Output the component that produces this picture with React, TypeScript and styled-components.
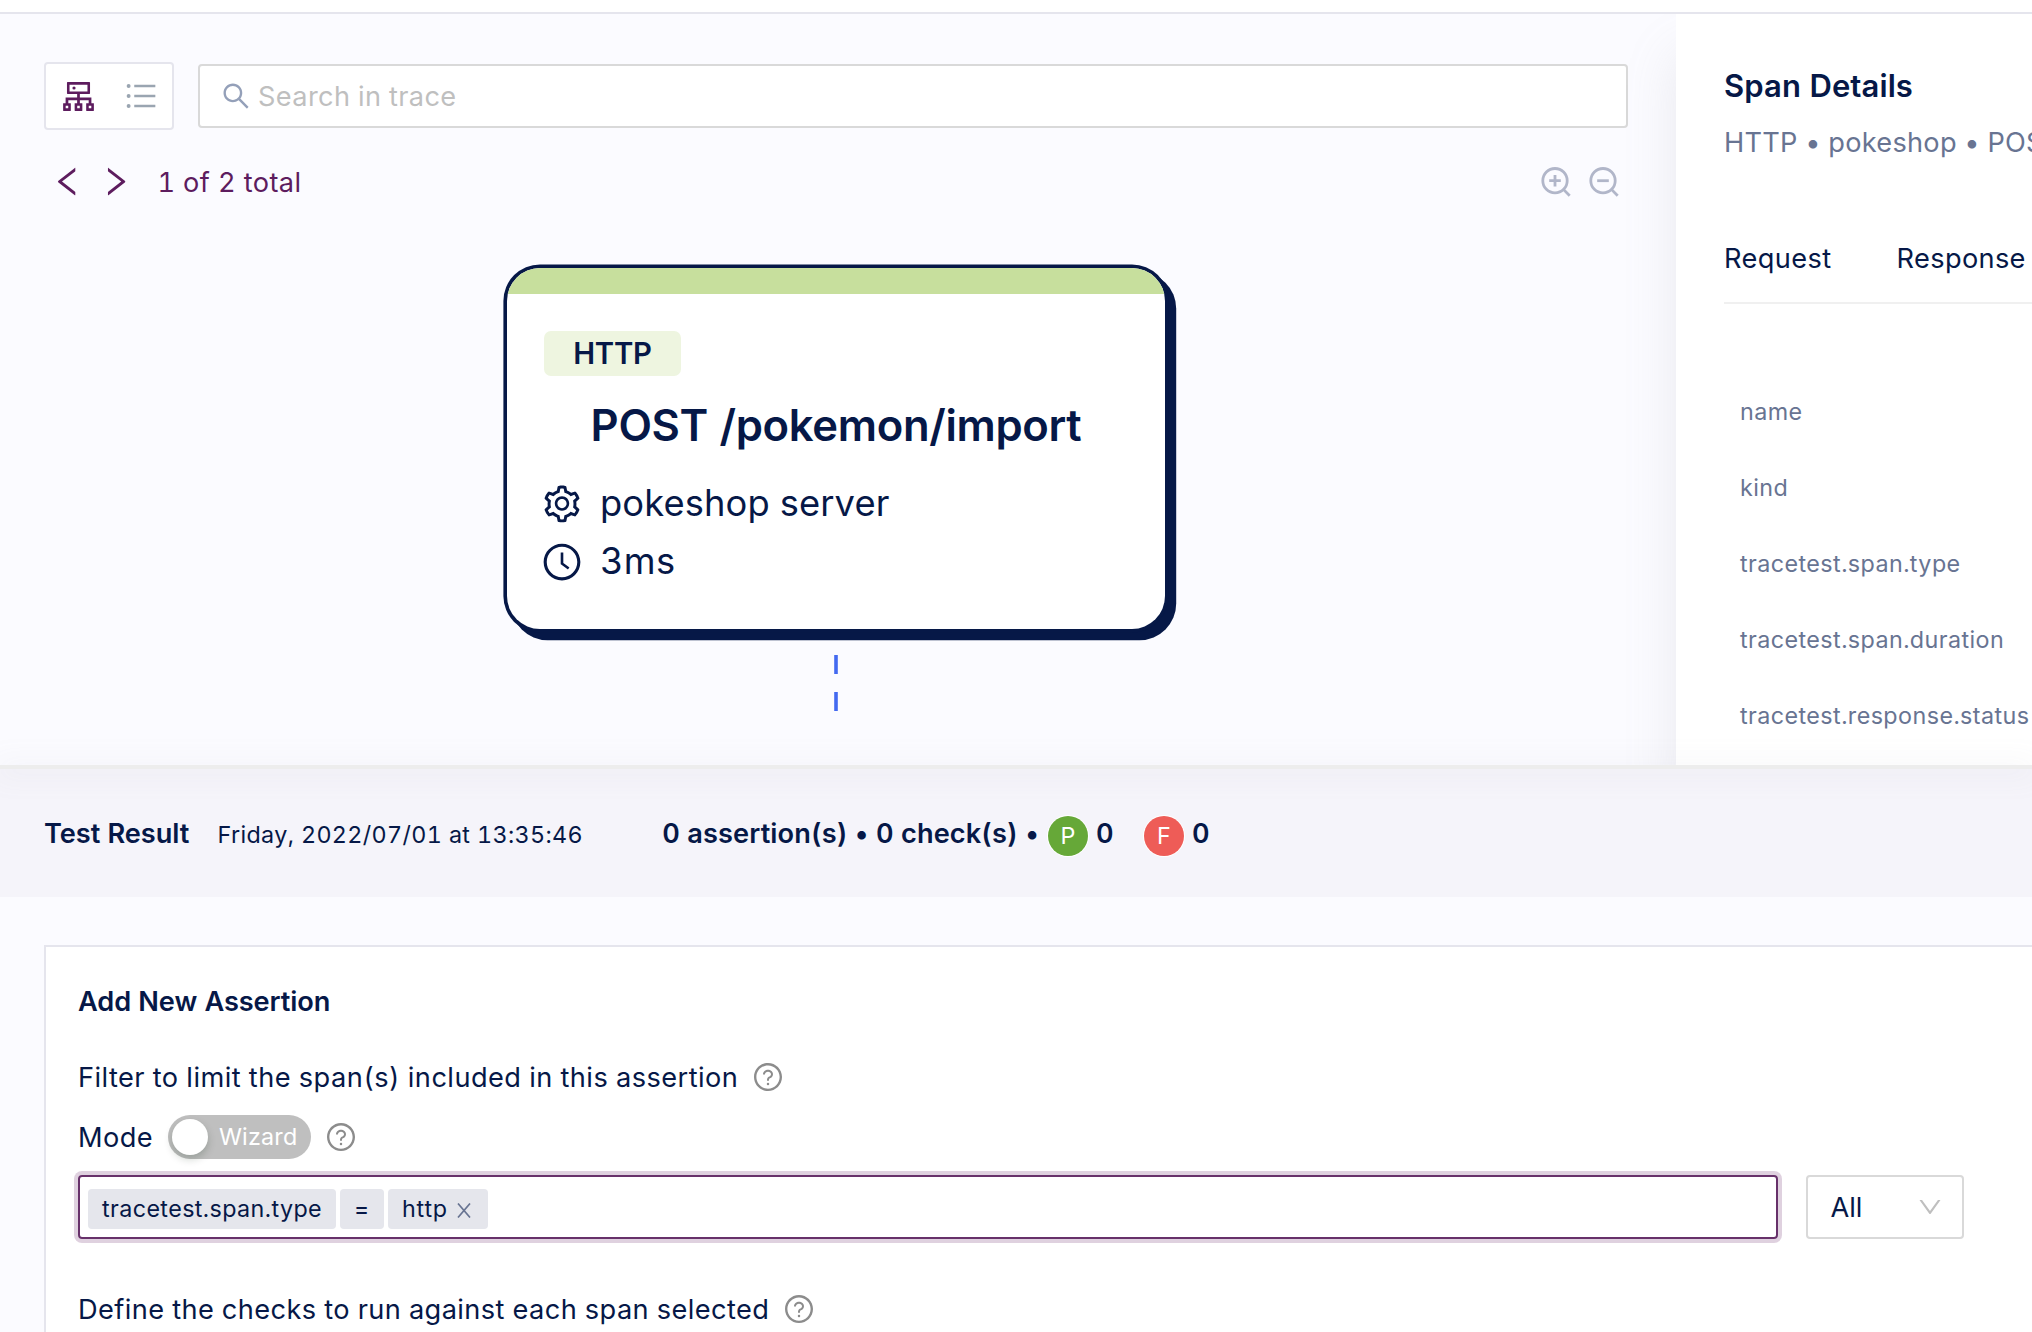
import React from 'react';
import styled, { createGlobalStyle } from 'styled-components';
import {
  AiOutlineClockCircle,
  AiOutlineCluster,
  AiOutlineDown,
  AiOutlineLeft,
  AiOutlineQuestionCircle,
  AiOutlineRight,
  AiOutlineSearch,
  AiOutlineSetting,
  AiOutlineUnorderedList,
} from 'react-icons/ai';

const color = {
  text: '#061847',
  secondary: '#687492',
  primary: '#5d1c5e',
  border: '#e5e5ed',
  inputBorder: '#d9d9d9',
  background: '#fbfbff',
};

const GlobalStyle = createGlobalStyle`
  *, *::before, *::after { box-sizing: border-box; }
  body {
    margin: 0;
    color: ${color.text};
    font-family: Inter, "Liberation Sans", sans-serif;
    font-feature-settings: "tnum";
  }
  svg { display: block; flex: none; }
`;

const Page = styled.div`
  display: flex;
  flex-direction: column;
  width: 2032px;
  height: 1332px;
  overflow: hidden;
  background: ${color.background};
`;

const TopStrip = styled.div`
  flex: none;
  height: 14px;
  background: #fff;
  border-bottom: 2px solid ${color.border};
`;

const Text = styled.span<{
  $size?: number;
  $weight?: number;
  $spacing?: number;
  $color?: string;
  $drop?: number;
}>`
  padding-top: ${p => p.$drop ?? 0}px;
  font-size: ${p => p.$size ?? 27.2}px;
  font-weight: ${p => p.$weight ?? 400};
  letter-spacing: ${p => p.$spacing ?? 0.4}px;
  color: ${p => p.$color ?? color.text};
  line-height: 40px;
  white-space: nowrap;
`;

/* Trace pane */

const Upper = styled.div`
  display: flex;
  flex: none;
  height: 751px;
  overflow: hidden;
`;

const TracePane = styled.section`
  flex: none;
  width: 1676px;
  padding: 48px 48px 0 44px;
`;

const Toolbar = styled.div`
  display: flex;
  align-items: center;
  gap: 24px;
`;

const ViewSwitch = styled.div`
  display: flex;
  align-items: center;
  gap: 24px;
  width: 130px;
  height: 68px;
  padding-left: 11.5px;
  background: #fff;
  border: 2px solid ${color.border};
  border-radius: 4px;
`;

const SearchBox = styled.div`
  display: flex;
  flex: 1;
  align-items: center;
  gap: 6px;
  height: 64px;
  padding-left: 20px;
  background: #fff;
  border: 2px solid ${color.inputBorder};
  border-radius: 4px;
`;

const Navigator = styled.div`
  display: flex;
  align-items: center;
  height: 40px;
  margin-top: 32px;
  padding: 0 9px 0 5px;
  color: ${color.primary};
`;

const Arrows = styled.div`
  display: flex;
  gap: 11px;
  margin-right: 23px;
`;

const ZoomControls = styled.div`
  display: flex;
  gap: 18px;
  margin-left: auto;
`;

const Diagram = styled.div`
  display: flex;
  flex-direction: column;
  align-items: center;
  width: 658px;
  margin: 66px 0 0 463px;
`;

const SpanNode = styled.article`
  width: 658px;
  height: 361px;
  overflow: hidden;
  background: #fff;
  border-radius: 33px;
  box-shadow: 0 0 0 3.6px ${color.text}, 7.6px 7.6px 0 3.6px ${color.text};
`;

const NodeStripe = styled.div`
  height: 26px;
  background: #c7df9d;
`;

const NodeBody = styled.div`
  display: flex;
  flex-direction: column;
  padding: 37px 37px 0;
`;

const NodeTag = styled.div`
  display: flex;
  align-items: center;
  justify-content: center;
  width: 137px;
  height: 45px;
  background: #eef5e0;
  border-radius: 7px;
`;

const NodeTitle = styled.h2`
  margin: 24px 0 31px;
  font-size: 43.6px;
  font-weight: 600;
  line-height: 52px;
  letter-spacing: -0.32px;
  text-align: center;
  white-space: nowrap;
`;

const NodeRow = styled.div`
  display: flex;
  align-items: center;
  gap: 17px;
  height: 42px;
  margin: 0 0 16px -3px;

  span { padding-bottom: 3px; }
`;

const EdgeLine = styled.svg`
  margin-top: 26px;
`;

/* Span details */

const DetailsPane = styled.aside`
  display: flex;
  flex-direction: column;
  flex: 1;
  min-width: 0;
  padding: 52px 0 0 48px;
  background: #fff;
  box-shadow: 0 40px 48px rgba(153, 155, 168, 0.18);
`;

const Subtitle = styled(Text)`
  margin-top: 17px;
`;

const Tabs = styled.nav`
  display: flex;
  gap: 65px;
  margin-top: 76px;
  padding-bottom: 23px;
  border-bottom: 2px solid #f0f0f0;
`;

const AttributeList = styled.ul`
  margin: 69px 0 0 16px;
  padding: 0;
  list-style: none;
`;

const Attribute = styled.li`
  display: flex;
  align-items: center;
  height: 76px;
`;

/* Results */

const Splitter = styled.div`
  position: relative;
  z-index: 1;
  flex: none;
  height: 4px;
  background: #ededed;
  box-shadow: 0 2px 28px 6px rgba(153, 155, 168, 0.08);
`;

const ResultBar = styled.header`
  display: grid;
  flex: none;
  grid-template-columns: 173.5px 444.8px 385.7px 48px 48px 48px auto;
  align-items: center;
  height: 128px;
  padding: 1px 0 0 44px;
  background: #f5f4fa;
`;

const Badge = styled.span<{ $color: string }>`
  width: 40px;
  height: 40px;
  margin-top: 4px;
  border-radius: 50%;
  box-shadow: 0 0 0 1px #fff;
  background: ${p => p.$color};
  color: #fff;
  font-size: 23.3px;
  line-height: 39px;
  text-align: center;
`;

const AssertionCard = styled.section`
  display: flex;
  flex: 1;
  flex-direction: column;
  min-height: 0;
  margin: 48px 0 0 44px;
  padding: 35px 0 0 32px;
  background: #fff;
  border: solid ${color.border};
  border-width: 2px 0 0 2px;
`;

const FormRow = styled.div<{ $top: number; $height?: number }>`
  display: flex;
  flex: none;
  align-items: center;
  gap: 14px;
  height: ${p => p.$height ?? 40}px;
  margin-top: ${p => p.$top}px;
`;

const Toggle = styled.div`
  display: flex;
  align-items: center;
  gap: 11px;
  width: 143px;
  height: 44px;
  margin-left: 1px;
  padding: 0 0 0 4px;
  background: #bfbfbf;
  border-radius: 22px;
`;

const Knob = styled.span`
  width: 36px;
  height: 36px;
  background: #fff;
  border-radius: 50%;
  box-shadow: 0 4px 8px rgba(0, 35, 11, 0.2);
`;

const SelectorRow = styled.div`
  display: flex;
  flex: none;
  gap: 28px;
  margin-top: 16px;
`;

const SelectorInput = styled.div`
  display: flex;
  align-items: center;
  gap: 4px;
  width: 1700px;
  height: 64px;
  padding: 4px 0 0 8px;
  border: 2px solid #67316a;
  border-radius: 4px;
  box-shadow: 0 0 0 4px rgba(97, 23, 94, 0.2);
`;

const Token = styled.span<{ $width: number }>`
  display: flex;
  align-items: center;
  justify-content: space-between;
  width: ${p => p.$width}px;
  height: 40px;
  padding: 0 14px;
  background: #e5e6ec;
  border-radius: 4px;
`;

const RemoveIcon = styled.svg`
  margin: 2px 3px 0 0;
`;

const Select = styled.div`
  display: flex;
  align-items: center;
  justify-content: space-between;
  width: 158px;
  height: 64px;
  padding: 0 18px 0 22.5px;
  border: 2px solid ${color.inputBorder};
  border-radius: 4px;
`;

const Magnifier = ({ plus }: { plus?: boolean }) => (
  <svg width="30" height="30" viewBox="0 0 30 30" fill="none" stroke="#b1b6c9" strokeWidth="2.8">
    <circle cx="14" cy="13.7" r="12.2" />
    <path d={plus ? 'M8.2 13.7h11.6M14 7.9v11.6' : 'M8.2 13.7h11.6'} />
    <path d="M22.7 22.6l6 6.2" />
  </svg>
);

const Help = () => <AiOutlineQuestionCircle size={32} color="#8c8c8c" />;

const attributes = [
  'name',
  'kind',
  'tracetest.span.type',
  'tracetest.span.duration',
  'tracetest.response.status',
];

export default function App() {
  return (
    <Page>
      <GlobalStyle />
      <TopStrip />
      <Upper>
        <TracePane>
          <Toolbar>
            <ViewSwitch>
              <AiOutlineCluster size={41} color={color.primary} />
              <AiOutlineUnorderedList size={36} color="#9aa5b1" />
            </ViewSwitch>
            <SearchBox>
              <AiOutlineSearch size={32} color="#94a0b9" />
              <Text $color="#bfbfbf" $spacing={0.35} $drop={2}>Search in trace</Text>
            </SearchBox>
          </Toolbar>
          <Navigator>
            <Arrows>
              <AiOutlineLeft size={37.2} />
              <AiOutlineRight size={37.2} />
            </Arrows>
            <Text $color={color.primary} $drop={2}>1 of 2 total</Text>
            <ZoomControls>
              <Magnifier plus />
              <Magnifier />
            </ZoomControls>
          </Navigator>
          <Diagram>
            <SpanNode>
              <NodeStripe />
              <NodeBody>
                <NodeTag>
                  <Text $size={29.3} $weight={600} $spacing={-0.2}>HTTP</Text>
                </NodeTag>
                <NodeTitle>POST /pokemon/import</NodeTitle>
                <NodeRow>
                  <AiOutlineSetting size={42} />
                  <Text $size={36.3} $spacing={0.12}>pokeshop server</Text>
                </NodeRow>
                <NodeRow>
                  <AiOutlineClockCircle size={42} />
                  <Text $size={36.3} $spacing={0.3}>3ms</Text>
                </NodeRow>
              </NodeBody>
            </SpanNode>
            <EdgeLine width="4" height="56" viewBox="0 0 4 56">
              <path d="M2 0v19M2 37v19" stroke="#4369f0" strokeWidth="3.6" />
            </EdgeLine>
          </Diagram>
        </TracePane>
        <DetailsPane>
          <Text $size={31} $weight={600} $spacing={0.1}>Span Details</Text>
          <Subtitle $color={color.secondary} $spacing={0.25}>HTTP • pokeshop • POST</Subtitle>
          <Tabs>
            <Text>Request</Text>
            <Text $spacing={0.34}>Response</Text>
          </Tabs>
          <AttributeList>
            {attributes.map(name => (
              <Attribute key={name}>
                <Text $size={23.3} $spacing={0.43} $color={color.secondary} $drop={1}>{name}</Text>
              </Attribute>
            ))}
          </AttributeList>
        </DetailsPane>
      </Upper>
      <Splitter />
      <ResultBar>
        <Text $weight={600} $spacing={-0.05}>Test Result</Text>
        <Text $size={23.3} $spacing={0.37} $drop={2}>Friday, 2022/07/01 at 13:35:46</Text>
        <Text $weight={600} $spacing={0.09}>0 assertion(s) • 0 check(s) •</Text>
        <Badge $color="#66a838">P</Badge>
        <Text $weight={600}>0</Text>
        <Badge $color="#ee5c57">F</Badge>
        <Text $weight={600}>0</Text>
      </ResultBar>
      <AssertionCard>
        <Text $weight={600} $spacing={-0.08}>Add New Assertion</Text>
        <FormRow $top={35}>
          <Text $spacing={0.45} $drop={2}>Filter to limit the span(s) included in this assertion</Text>
          <Help />
        </FormRow>
        <FormRow $top={18} $height={44}>
          <Text $drop={2}>Mode</Text>
          <Toggle>
            <Knob />
            <Text $size={23.3} $spacing={0.2} $color="#fff">Wizard</Text>
          </Toggle>
          <Help />
        </FormRow>
        <SelectorRow>
          <SelectorInput>
            <Token $width={248}>
              <Text $size={23.3} $spacing={0.4}>tracetest.span.type</Text>
            </Token>
            <Token $width={44}>
              <Text $size={23.3} $spacing={0}>=</Text>
            </Token>
            <Token $width={100}>
              <Text $size={23.3} $spacing={0.8}>http</Text>
              <RemoveIcon
                width="14"
                height="15"
                viewBox="0 0 14 15"
                fill="none"
                stroke={color.secondary}
                strokeWidth="1.7"
              >
                <path d="M1 0.5l12 14M13 0.5l-12 14" />
              </RemoveIcon>
            </Token>
          </SelectorInput>
          <Select>
            <Text $spacing={0} $drop={1}>All</Text>
            <AiOutlineDown size={28} color="#bfbfbf" />
          </Select>
        </SelectorRow>
        <FormRow $top={50}>
          <Text $spacing={0.4} $drop={2}>Define the checks to run against each span selected</Text>
          <Help />
        </FormRow>
      </AssertionCard>
    </Page>
  );
}
